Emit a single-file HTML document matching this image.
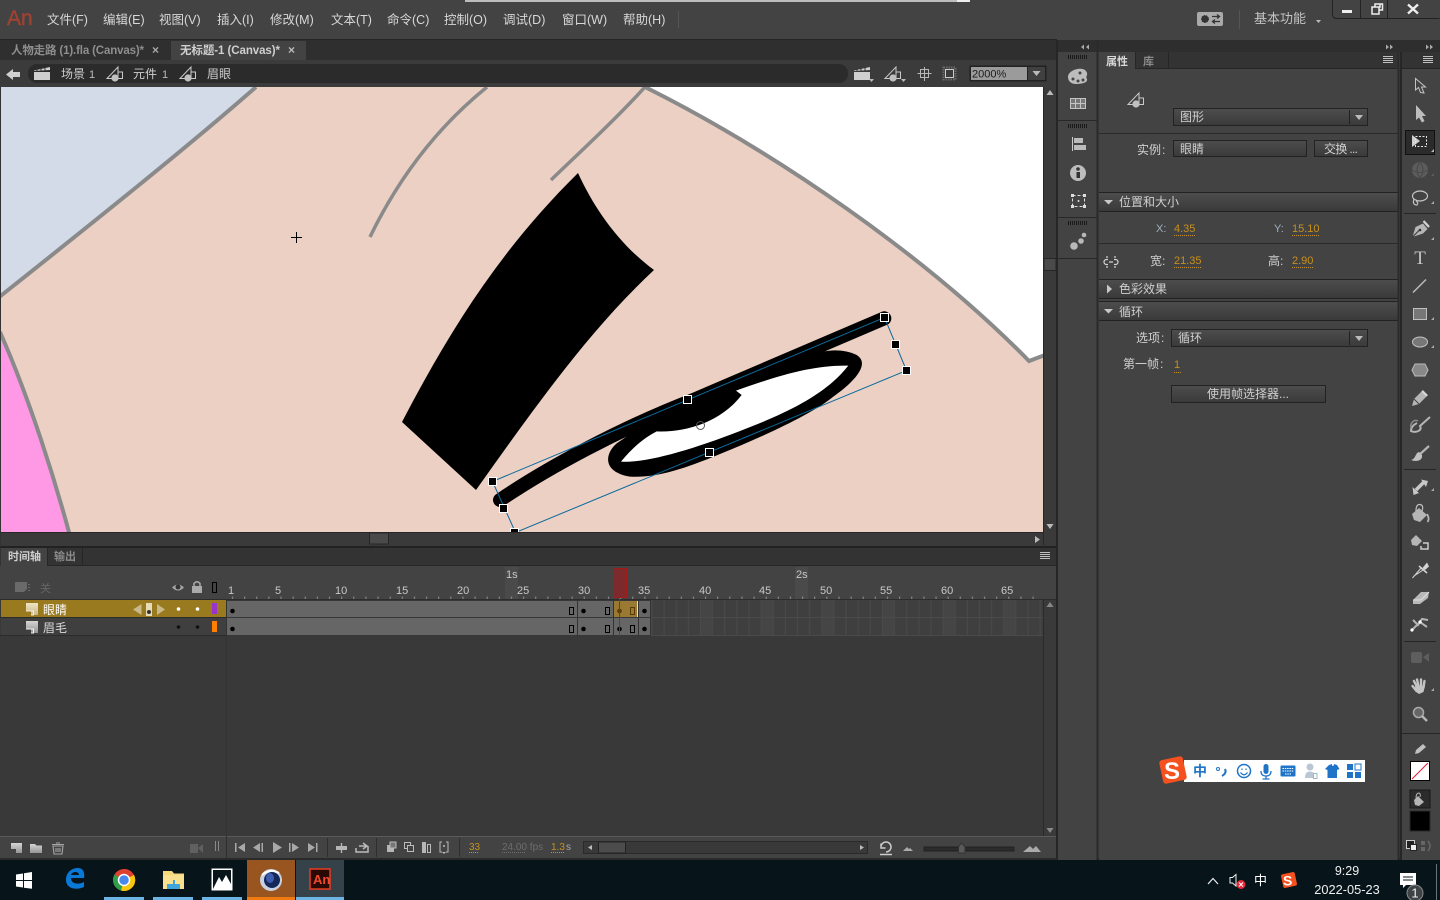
<!DOCTYPE html>
<html lang="zh"><head><meta charset="utf-8"><title>Animate</title>
<style>
html,body{margin:0;padding:0;background:#434343;width:1440px;height:900px;overflow:hidden}
svg{display:block;position:absolute;left:0;top:0}
text{font-family:"Liberation Sans","WenQuanYi Zen Hei","Noto Sans CJK SC",sans-serif;font-size:12px;fill:#d0d0d0}
.m{font-size:12.5px;fill:#d8d8d8}
.o{fill:#c8901c;font-size:11px}
.r{font-size:11px;fill:#c8c8c8}
</style></head><body>
<svg width="1440" height="900" viewBox="0 0 1440 900" xmlns="http://www.w3.org/2000/svg">
<defs>
<linearGradient id="g" x1="0" y1="0" x2="0" y2="1"><stop offset="0" stop-color="#4d4d4d"/><stop offset="1" stop-color="#3a3a3a"/></linearGradient>
<linearGradient id="ic" x1="0" y1="0" x2="0" y2="1"><stop offset="0" stop-color="#d4d4d4"/><stop offset="1" stop-color="#959595"/></linearGradient>
<linearGradient id="ic2" x1="0" y1="0" x2="0" y2="1"><stop offset="0" stop-color="#efe5c4"/><stop offset="1" stop-color="#c9b98a"/></linearGradient>
<pattern id="cells" x="700" y="600" width="60.65" height="18" patternUnits="userSpaceOnUse"><rect width="60.65" height="18" fill="#3f3f3f"/><rect width="12.13" height="18" fill="#454545"/><path d="M.5 0V18M12.6 0V18M24.8 0V18M36.9 0V18M49 0V18M0 17.500H60.650" stroke="#4a4a4a" fill="none"/></pattern>
<pattern id="ticks" x="227" y="595" width="12.13" height="5" patternUnits="userSpaceOnUse"><rect x="5" y="1.500" width="1" height="3" fill="#8f8f8f"/></pattern>
<clipPath id="st"><rect x="1" y="87" width="1042" height="445"/></clipPath>
<g id="sym"><path d="M-8 4.500 L3 -7 V4.500 Z" fill="none" stroke="#cacaca"/><path d="M3 -2H7.500V4.500H3" fill="none" stroke="#cacaca"/><circle cx="0" cy="4" r="3.600" fill="#c0c0c0"/></g>
<g id="ham"><path d="M-5 -3.500H5M-5 -1.500H5M-5 .5H5M-5 2.500H5" stroke="#c0c0c0"/></g>
<g id="clap"><rect x="-8" y="-2" width="16" height="8" fill="#cfcfcf"/><path d="M-8 -3.500L8 -7V-4L-8 -3Z" fill="#cfcfcf"/><path d="M-5 -6V-3M-1 -6V-3M3 -7V-3" stroke="#333"/></g>
<g id="lic"><path d="M-6 -6H6V6H-1V1.500H-6Z" fill="url(#ic)"/><path d="M-6 2H1.500V6H-1" fill="none" stroke="#eee"/></g>
<g id="lic2"><path d="M-6 -6H6V6H-1V1.500H-6Z" fill="url(#ic2)"/><path d="M-6 2H1.500V6H-1" fill="none" stroke="#f6efd8"/></g>
</defs>

<rect width="1440" height="900" fill="#434343"/>
<!-- top bar -->
<rect x="465" y="0" width="505" height="2" fill="#bdbdbd"/>
<rect x="957" y="0" width="13" height="2" fill="#eee"/>
<text x="7" y="25" style="font-size:21px;fill:#a04232;stroke:#a04232;stroke-width:.4">An</text>
<text class="m" x="47" y="24">文件(F)</text><text class="m" x="103" y="24">编辑(E)</text><text class="m" x="159" y="24">视图(V)</text><text class="m" x="217" y="24">插入(I)</text><text class="m" x="270" y="24">修改(M)</text><text class="m" x="331" y="24">文本(T)</text><text class="m" x="387" y="24">命令(C)</text><text class="m" x="444" y="24">控制(O)</text><text class="m" x="503" y="24">调试(D)</text><text class="m" x="562" y="24">窗口(W)</text><text class="m" x="623" y="24">帮助(H)</text>
<path d="M678.500 11V28" stroke="#555"/>
<rect x="1197" y="12" width="26" height="14" rx="2" fill="#aaa"/>
<circle cx="1205" cy="19" r="3.500" fill="#333" stroke="#333" stroke-dasharray="1.500 1"/>
<path d="M1212 16.500H1219M1217 14.500L1219.500 16.500L1217 18.500M1220 21.500H1213M1215 19.500L1212.500 21.500L1215 23.500" stroke="#333" fill="none" stroke-width="1.300"/>
<path d="M1239.500 10V29" stroke="#555"/>
<text x="1254" y="23" style="font-size:13px;fill:#c4c4c4">基本功能</text>
<path d="M1316 20h5l-2.500 3z" fill="#bbb"/>
<path d="M1332.500 0V14Q1332.500 18.500 1337 18.500H1439.500M1360.500 0V18M1387.500 0V18" fill="none" stroke="#222"/>
<rect x="1342" y="10" width="10" height="3" fill="#eee"/>
<path d="M1372 7h8v-3h-5v3M1372 7v7h7v-7zM1379.500 4h3v6h-3" fill="none" stroke="#eee" stroke-width="1.500"/>
<path d="M1408 4.500L1418 13.500M1418 4.500L1408 13.500" stroke="#eee" stroke-width="2.400"/>

<!-- tabs -->
<rect x="0" y="39" width="1057" height="21" fill="#2f2f2f"/>
<path d="M0 39.500H1057" stroke="#252525"/>
<rect x="171" y="41" width="135" height="19" fill="#434343"/>
<text x="11" y="54" textLength="133" style="font-size:11.500px;fill:#8e8e8e;font-weight:bold">人物走路 (1).fla (Canvas)*</text>
<text x="152" y="54" style="font-size:12px;fill:#aaa;font-weight:bold">×</text>
<text x="180" y="54" textLength="100" style="font-size:11.500px;fill:#cfcfcf;font-weight:bold">无标题-1 (Canvas)*</text>
<text x="288" y="54" style="font-size:12px;fill:#bbb;font-weight:bold">×</text>

<!-- edit bar -->
<rect x="0" y="60" width="1057" height="27" fill="#3b3b3b"/>
<rect x="28" y="64" width="820" height="19" rx="9" fill="#2b2b2b"/>
<path d="M6 74.500L13 69V72H20V77H13V80Z" fill="#d0d0d0"/>
<use href="#clap" x="42" y="74"/>
<text x="61" y="78" style="font-size:12px;fill:#cfcfcf">场景</text><text x="89" y="78" style="font-size:11px;fill:#bbb">1</text>
<use href="#sym" x="115" y="74"/>
<text x="133" y="78" style="font-size:12px;fill:#cfcfcf">元件</text><text x="162" y="78" style="font-size:11px;fill:#bbb">1</text>
<use href="#sym" x="188" y="74"/>
<text x="207" y="78" style="font-size:12px;fill:#cfcfcf">眉眼</text>
<use href="#clap" x="862" y="74"/><path d="M869 79h5l-2.500 3z" fill="#bbb"/>
<use href="#sym" x="893" y="74"/><path d="M901 79h5l-2.500 3z" fill="#bbb"/>
<path d="M924.500 67V81M917.500 73.500H931.500" stroke="#b8b8b8"/><rect x="920.500" y="69.500" width="8" height="8" fill="none" stroke="#b8b8b8"/>
<rect x="943.500" y="67.500" width="12" height="12" fill="none" stroke="#6a6a6a" stroke-width="2" stroke-dasharray="1.500 1"/><rect x="945.500" y="69.500" width="8" height="8" fill="none" stroke="#ccc"/>
<rect x="969.500" y="65.500" width="77" height="16" fill="#222"/>
<rect x="971" y="67" width="56" height="13" fill="#9b9b9b"/>
<rect x="1028" y="67" width="17" height="13" fill="#404040"/>
<path d="M1032.500 71h8l-4 5z" fill="#bbb"/>
<text x="972" y="77.500" style="font-size:11px;fill:#1a1a1a">2000%</text>

<!-- stage -->
<rect x="1" y="87" width="1042" height="445" fill="#ecd0c3"/>
<g clip-path="url(#st)">
<path d="M-2 87H256C190 145 90 225 -2 298Z" fill="#d3dae8"/>
<path d="M-2 298C90 225 190 145 256 87" fill="none" stroke="#8a8a8a" stroke-width="4"/>
<path d="M645 87C775 152 925 255 1029 361L1045 355V87Z" fill="#fff"/>
<path d="M645 87C775 152 925 255 1029 361L1045 355" fill="none" stroke="#8a8a8a" stroke-width="4"/>
<path d="M-2 330C30 400 55 480 70 536H-2Z" fill="#ff99e6"/>
<path d="M0 332C30 400 55 480 70 536" fill="none" stroke="#8a8a8a" stroke-width="4"/>
<path d="M487 87C440 125 400 175 370 237" fill="none" stroke="#8a8a8a" stroke-width="3.500"/>
<path d="M645 87C615 120 580 152 551 180" fill="none" stroke="#8a8a8a" stroke-width="3.500"/>
<path d="M578 173C595 210 620 245 654 270C590 330 540 400 476 490L402 422C450 330 500 250 578 173Z" fill="#000"/>
<g transform="translate(480 300) scale(.33333)">
<path d="M60 600C200 505 420 385 640 300L1213 55" fill="none" stroke="#000" stroke-width="42" stroke-linecap="round"/>
<path d="M410 430C375 460 365 515 450 530C540 535 640 495 720 462C850 410 1000 340 1060 290C1130 240 1170 190 1130 165C1100 150 1060 148 1030 155L600 300Z" fill="#000"/>
<path d="M423 485C460 440 495 412 530 394C610 398 720 370 785 285L768 272C900 225 1000 195 1105 197C1040 280 930 335 800 385C650 445 500 490 423 485Z" fill="#fff"/>
</g>
<path d="M492.500 481.500L884.500 317.500L906.500 370.500L515.500 532.500Z" fill="none" stroke="#0a6a9c"/>
<g fill="#000" stroke="#fff">
<rect x="488.500" y="477.500" width="8" height="8"/><rect x="683.500" y="395.500" width="8" height="8"/><rect x="880.500" y="313.500" width="8" height="8"/><rect x="891.500" y="340.500" width="8" height="8"/><rect x="902.500" y="366.500" width="8" height="8"/><rect x="705.500" y="448.500" width="8" height="8"/><rect x="510.500" y="528.500" width="8" height="8"/><rect x="499.500" y="504.500" width="8" height="8"/>
</g>
<circle cx="700.500" cy="425.500" r="4" fill="none" stroke="#555"/>
<path d="M296.500 232V243M291 237.500H302" stroke="#000"/>
</g>
<!-- scrollbars -->
<rect x="1043" y="87" width="14" height="458" fill="#3a3a3a"/>
<rect x="0" y="532" width="1057" height="14" fill="#3a3a3a"/>
<path d="M0 532.500H1043M1043.500 87V545" stroke="#272727"/>
<path d="M1050 90l3.500 5h-7zM1050 529l3.500-5h-7z" fill="#bbb"/>
<path d="M1035 536l5 3.500-5 3.500z" fill="#bbb"/>
<rect x="1044" y="258.500" width="12" height="12" fill="#4a4a4a" stroke="#262626"/>
<rect x="369.500" y="533" width="19" height="11" fill="#4a4a4a" stroke="#262626"/>

<!-- timeline -->
<rect x="0" y="546" width="1057" height="2" fill="#222"/>
<rect x="0" y="548" width="1057" height="18" fill="#333"/>
<rect x="1" y="548" width="46" height="18" fill="#434343"/>
<path d="M47.500 548V566M82.500 548V566" stroke="#262626"/>
<path d="M47 565.500H1057" stroke="#262626"/>
<text x="8" y="560" style="font-size:11px;fill:#d0d0d0;font-weight:bold">时间轴</text>
<text x="54" y="560" style="font-size:11px;fill:#8a8a8a;font-weight:bold">输出</text>
<use href="#ham" x="1045" y="556"/>
<rect x="0" y="566" width="1057" height="34" fill="#434343"/>
<rect x="505" y="567" width="13" height="33" fill="#4a4a4a"/><rect x="795" y="567" width="13" height="33" fill="#4a4a4a"/>
<rect x="227" y="595" width="816" height="5" fill="url(#ticks)"/>
<text class="r" x="506" y="578">1s</text><text class="r" x="796" y="578">2s</text>
<text class="r" x="228" y="594">1</text><text class="r" x="275" y="594">5</text><text class="r" x="335" y="594">10</text><text class="r" x="396" y="594">15</text><text class="r" x="457" y="594">20</text><text class="r" x="517" y="594">25</text><text class="r" x="578" y="594">30</text><text class="r" x="638" y="594">35</text><text class="r" x="699" y="594">40</text><text class="r" x="759" y="594">45</text><text class="r" x="820" y="594">50</text><text class="r" x="880" y="594">55</text><text class="r" x="941" y="594">60</text><text class="r" x="1001" y="594">65</text>
<!-- layers header -->
<path d="M15 582H27V589L24 592H15Z" fill="#6a6a6a"/><path d="M29 584v1M29 587v1M29 590v1" stroke="#777" stroke-width="1.500"/>
<text x="40" y="592" style="font-size:11px;fill:#666">关</text>
<path d="M172 587.500Q178 581.500 184 587.500Q178 593.500 172 587.500Z" fill="#a5a5a5"/><circle cx="178" cy="587" r="2.500" fill="#333"/>
<rect x="192" y="586" width="10" height="7" fill="#aaa"/><path d="M194 586V583.500Q197 580 200 583.500V586" fill="none" stroke="#aaa" stroke-width="1.500"/>
<rect x="212.500" y="582.500" width="4" height="10" fill="none" stroke="#000"/>
<!-- layers -->
<rect x="0" y="600" width="1057" height="236" fill="#393939"/>
<path d="M0 599.500H1057" stroke="#2c2c2c"/>
<rect x="1" y="600" width="225" height="18" fill="#9a7a1e"/>
<rect x="1" y="618" width="225" height="18" fill="#3f3f3f"/>
<path d="M0 617.500H227M0 635.500H1043" stroke="#2c2c2c"/>
<use href="#lic2" x="32" y="609"/><use href="#lic" x="32" y="627"/>
<text x="43" y="614" style="font-size:12px;fill:#fff">眼睛</text>
<text x="43" y="632" style="font-size:12px;fill:#ddd">眉毛</text>
<path d="M133 609.500L141.500 604V615Z" fill="#c9b98a"/><rect x="146" y="603" width="6" height="13" fill="#e8dcb8"/><circle cx="149" cy="612" r="2" fill="#333"/><path d="M165 609.500L157 604V615Z" fill="#c9b98a"/>
<circle cx="178.500" cy="609" r="1.800" fill="#fff"/><circle cx="197.500" cy="609" r="1.800" fill="#fff"/>
<circle cx="178.500" cy="627" r="1.800" fill="#111"/><circle cx="197.500" cy="627" r="1.800" fill="#111"/>
<rect x="212" y="603" width="5" height="11" fill="#9933cc"/>
<rect x="212" y="621" width="5" height="11" fill="#ff8000"/>
<!-- frames -->
<rect x="650.600" y="600" width="392.400" height="36" fill="url(#cells)"/>
<rect x="227" y="600" width="424" height="35" fill="#666"/>
<path d="M227 600.500H651M227 617.500H651M227 635.500H651" stroke="#383838"/>
<rect x="613.500" y="601" width="24" height="16" fill="#9a7a32"/>
<path d="M637.500 601V617" stroke="#ffe83c"/>
<path d="M226.500 600V836M577.500 600V636M613.500 600V636M638.500 600V636M650.500 600V636" stroke="#333"/>
<g fill="#000"><circle cx="232.500" cy="611" r="2.300"/><circle cx="232.500" cy="629" r="2.300"/><circle cx="583.500" cy="611" r="2.300"/><circle cx="583.500" cy="629" r="2.300"/><circle cx="619.500" cy="611" r="2.300" fill="#5a3c06"/><circle cx="619.500" cy="629" r="2.300"/><circle cx="644.500" cy="611" r="2.300"/><circle cx="644.500" cy="629" r="2.300"/></g>
<g fill="none" stroke="#000"><rect x="569.500" y="607.500" width="4" height="7"/><rect x="569.500" y="625.500" width="4" height="7"/><rect x="605.500" y="607.500" width="4" height="7"/><rect x="605.500" y="625.500" width="4" height="7"/><rect x="630.500" y="607.500" width="4" height="7" stroke="#5a3c06"/><rect x="630.500" y="625.500" width="4" height="7"/></g>
<rect x="613.500" y="568.500" width="13" height="29" fill="#7c2a2c" stroke="#a81a1a"/>
<path d="M619.500 598V636" stroke="#c01818"/><path d="M619.500 636V836" stroke="#5c2a2a"/>
<rect x="1043" y="600" width="14" height="236" fill="#3a3a3a"/>
<path d="M1043.500 600V836" stroke="#2a2a2a"/>
<path d="M1050 602l3.500 5h-7zM1050 833l3.500-5h-7z" fill="#888"/>

<!-- timeline bottom -->
<rect x="0" y="836" width="1057" height="23" fill="#434343"/>
<path d="M0 836.500H1057" stroke="#5a5a5a"/>
<path d="M226.500 836V858M327.500 838V857M376.500 838V857M459.500 838V857" stroke="#2f2f2f"/>
<path d="M11 843H22V853H16V849H11Z" fill="url(#ic)"/>
<path d="M30 844H35L36.500 845.500H42V853H30Z" fill="url(#ic)"/>
<path d="M53 846H63L62 854H54ZM52 844.500H64M56 843H60M56 848V852M58 848V852M60 848V852" stroke="#a5a5a5" fill="none" stroke-width="1.100"/>
<rect x="190" y="844" width="8" height="9" fill="#606060"/><path d="M198 848L203 844V853Z" fill="#606060"/>
<path d="M215.500 841V851M218.500 841V851" stroke="#8a8a8a"/>
<g fill="#a8a8a8">
<path d="M235 843h1.500v9H235zM245 843v9l-7-4.500z"/>
<path d="M260 843v9l-7-4.500zM261.500 843h1.500v9h-1.500z"/>
<path d="M273 842v11l9-5.500z"/>
<path d="M289 843h1.500v9H289zM292 843l7 4.500-7 4.500z"/>
<path d="M308 843l7 4.500-7 4.500zM316 843h1.500v9H316z"/>
</g>
<path d="M341.500 843V853" stroke="#b5b5b5" stroke-width="1.400"/><rect x="336" y="846" width="11" height="4" fill="#b5b5b5"/>
<path d="M356 848V852H368V846M359 846L366 846M363 843L367 846L363 849" fill="none" stroke="#bbb" stroke-width="1.500"/>
<rect x="387" y="845" width="7" height="7" fill="#b5b5b5"/><rect x="390" y="842" width="6" height="6" fill="#777" stroke="#bbb"/>
<rect x="404.500" y="842.500" width="6" height="6" fill="none" stroke="#bbb"/><rect x="407.500" y="845.500" width="6" height="6" fill="#434343" stroke="#bbb"/>
<rect x="422" y="842" width="4" height="11" fill="#b5b5b5"/><rect x="427.500" y="844.500" width="3" height="8" fill="none" stroke="#bbb"/>
<path d="M442 842H440V852H442M446 842H448V852H446" fill="none" stroke="#bbb"/><circle cx="444" cy="846" r="1" fill="#bbb"/><path d="M442 852h4l-2 2z" fill="#bbb"/>
<text class="o" x="469" y="850" style="font-size:10px">33</text><path d="M469 852.500H479" stroke="#c8901c" stroke-dasharray="1 1"/>
<text x="502" y="850" style="font-size:10px;fill:#6d6d6d">24.00 fps</text><path d="M502 852.500H526" stroke="#6d6d6d" stroke-dasharray="1 1"/>
<text class="o" x="551" y="850" style="font-size:10px">1.3</text><text x="566" y="850" style="font-size:10px;fill:#aaa">s</text><path d="M551 852.500H564" stroke="#c8901c" stroke-dasharray="1 1"/>
<rect x="583.500" y="841.500" width="284" height="12" fill="#393939" stroke="#2a2a2a"/>
<rect x="598.500" y="842" width="27" height="11" fill="#4c4c4c" stroke="#222"/>
<path d="M592 845v5l-4-2.500zM860 845v5l4-2.500z" fill="#bbb"/>
<path d="M881 847A5 5 0 1 1 886 852M881 843.500V848H885.500M880 854.500H892" fill="none" stroke="#ccc" stroke-width="1.500"/>
<path d="M903 851l4-4 2 2 1-1 3 3z" fill="#aaa"/>
<rect x="924" y="847" width="90" height="4" fill="#2b2b2b" stroke="#222"/>
<path d="M958.500 853V847L961.500 843L965 847V853Z" fill="#5a5a5a" stroke="#333"/>
<path d="M1023 852l7-6 3 3 3-3 5 6z" fill="#aaa"/>

<!-- dividers -->
<rect x="1056" y="40" width="2" height="820" fill="#262626"/>
<rect x="0" y="858" width="1440" height="2" fill="#2a2a2a"/>
<rect x="0" y="87" width="1" height="460" fill="#333"/>

<!-- right header -->
<rect x="1058" y="40" width="382" height="12" fill="#2e2e2e"/>
<path d="M1084 44.500l-3 2.500 3 2.500zM1089 44.500l-3 2.500 3 2.500zM1386 44.500l3 2.500-3 2.500zM1390 44.500l3 2.500-3 2.500zM1426 44.500l3 2.500-3 2.500zM1430 44.500l3 2.500-3 2.500z" fill="#aaa"/>
<!-- left icon column -->
<rect x="1058" y="52" width="40" height="808" fill="#434343"/>
<path d="M1058 120.500H1097M1058 217.500H1097M1058 258.500H1097" stroke="#282828"/>
<path d="M1097.500 40V860" stroke="#2a2a2a" stroke-width="2"/>
<g stroke="#1a1a1a" stroke-dasharray="1 1"><path d="M1068 57H1088M1068 126H1088M1068 223H1088" stroke-width="4"/></g>
<path d="M1068 77C1068 70 1082 66 1086 71C1089 75 1085 76 1087 79C1088 83 1081 84 1076 84C1071 84 1068 81 1068 77Z" fill="#bcbcbc"/>
<g fill="#444"><circle cx="1073" cy="79" r="1.500"/><circle cx="1078" cy="81" r="1.500"/><circle cx="1083" cy="80" r="1.500"/><circle cx="1080" cy="73" r="1.500"/></g>
<rect x="1070.500" y="98.500" width="15" height="10" fill="#777" stroke="#c4c4c4"/><path d="M1070 103.500H1086M1075.500 98V109M1080.500 98V109" stroke="#c4c4c4"/>
<path d="M1072.500 137V151" stroke="#ccc"/><rect x="1074" y="138" width="9" height="5" fill="#bbb"/><rect x="1074" y="145" width="12" height="5" fill="#bbb"/>
<circle cx="1078" cy="173" r="8" fill="#bdbdbd"/><rect x="1076.500" y="172" width="3.500" height="6" fill="#333"/><circle cx="1078" cy="169" r="1.800" fill="#333"/>
<rect x="1072.500" y="195.500" width="12" height="11" fill="none" stroke="#ddd" stroke-dasharray="3 2"/><circle cx="1078.500" cy="201" r="1" fill="#ddd"/><g fill="#ddd"><rect x="1071" y="194" width="3" height="3"/><rect x="1083" y="194" width="3" height="3"/><rect x="1071" y="205" width="3" height="3"/><rect x="1083" y="205" width="3" height="3"/></g>
<circle cx="1074" cy="246" r="3.800" fill="#b8b8b8"/><circle cx="1081" cy="241" r="2.800" fill="#b8b8b8"/><circle cx="1084" cy="235" r="2.300" fill="#b8b8b8"/>

<!-- properties -->
<rect x="1099" y="52" width="300" height="808" fill="#434343"/>
<rect x="1099" y="52" width="300" height="17" fill="#333"/>
<rect x="1099" y="52" width="36" height="17" fill="#434343"/>
<path d="M1135.500 52V68.500H1168.500V52M1135 68.500H1399" stroke="#262626" fill="none"/>
<text x="1106" y="65" style="font-size:11px;fill:#d8d8d8;font-weight:bold">属性</text>
<text x="1143" y="65" style="font-size:11px;fill:#8a8a8a;font-weight:bold">库</text>
<use href="#ham" x="1388" y="60"/>
<use href="#sym" x="1136" y="100"/>
<rect x="1173.500" y="108.500" width="194" height="17" fill="url(#g)" stroke="#222"/>
<path d="M1349.500 110V124" stroke="#222"/><path d="M1355 115h8l-4 5z" fill="#bbb"/>
<text x="1180" y="121" style="font-size:12px">图形</text>
<path d="M1099 133.500H1399" stroke="#2a2a2a"/>
<text x="1137" y="154" style="font-size:12px">实例</text><text x="1162" y="154" style="font-size:12px">:</text>
<rect x="1173.500" y="140.500" width="133" height="16" fill="url(#g)" stroke="#222"/>
<text x="1180" y="153" style="font-size:12px">眼睛</text>
<rect x="1314.500" y="140.500" width="53" height="16" fill="url(#g)" stroke="#222"/>
<text x="1324" y="153" textLength="34" style="font-size:12px">交换 ...</text>
<rect x="1099" y="193" width="300" height="18" fill="url(#g)"/><path d="M1099 192.500H1399M1099 211.500H1399" stroke="#222"/>
<path d="M1104 200h9l-4.500 4.500z" fill="#c8c8c8"/>
<text x="1119" y="206" style="font-size:12px">位置和大小</text>
<text x="1156" y="232" style="font-size:11px;fill:#9fb0c0">X:</text><text class="o" x="1174" y="232">4.35</text><path d="M1174 235.500H1195" stroke="#c8901c" stroke-dasharray="1 1"/>
<text x="1274" y="232" style="font-size:11px;fill:#9fb0c0">Y:</text><text class="o" x="1292" y="232">15.10</text><path d="M1292 235.500H1319" stroke="#c8901c" stroke-dasharray="1 1"/>
<path d="M1099 243.500H1399" stroke="#2a2a2a"/>
<path d="M1108 259.500H1106.500A2.500 2.500 0 0 0 1106.500 264.500H1108M1114 259.500H1115.500A2.500 2.500 0 0 1 1115.500 264.500H1114M1107 256V258M1115 256V258M1107 266V268M1115 266V268M1109 262H1113" fill="none" stroke="#d4d4d4" stroke-width="1.200"/>
<text x="1150" y="265" style="font-size:12px">宽:</text><text class="o" x="1174" y="264">21.35</text><path d="M1174 267.500H1201" stroke="#c8901c" stroke-dasharray="1 1"/>
<text x="1268" y="265" style="font-size:12px">高:</text><text class="o" x="1292" y="264">2.90</text><path d="M1292 267.500H1313" stroke="#c8901c" stroke-dasharray="1 1"/>
<rect x="1099" y="280" width="300" height="18" fill="url(#g)"/><path d="M1099 279.500H1399M1099 298.500H1399" stroke="#222"/>
<path d="M1107 284.500l5 4.500-5 4.500z" fill="#c8c8c8"/>
<text x="1119" y="293" style="font-size:12px">色彩效果</text>
<rect x="1099" y="302" width="300" height="18" fill="url(#g)"/><path d="M1099 301.500H1399M1099 320.500H1399" stroke="#222"/>
<path d="M1104 309h9l-4.500 4.500z" fill="#c8c8c8"/>
<text x="1119" y="316" style="font-size:12px">循环</text>
<text x="1136" y="342" style="font-size:12px">选项</text><text x="1161" y="342" style="font-size:12px">:</text>
<rect x="1171.500" y="329.500" width="196" height="17" fill="url(#g)" stroke="#222"/>
<path d="M1349.500 331V345" stroke="#222"/><path d="M1355 336h8l-4 5z" fill="#bbb"/>
<text x="1178" y="342" style="font-size:12px">循环</text>
<text x="1123" y="368" style="font-size:12px">第一帧</text><text x="1160" y="368" style="font-size:12px">:</text>
<text class="o" x="1174" y="368">1</text><path d="M1174 372.500H1181" stroke="#c8901c" stroke-dasharray="1 1"/>
<rect x="1171.500" y="385.500" width="154" height="17" fill="url(#g)" stroke="#222"/>
<text x="1207" y="398" style="font-size:12px">使用帧选择器...</text>
<path d="M1398.500 52V860" stroke="#2a2a2a" stroke-width="2"/>

<!-- tools -->
<rect x="1400" y="52" width="2" height="808" fill="#262626"/>
<rect x="1402" y="52" width="38" height="808" fill="#434343"/>
<rect x="1402" y="52" width="38" height="17" fill="#333"/><path d="M1402 68.500H1440" stroke="#262626"/>
<use href="#ham" x="1428" y="60"/>
<path d="M1415.500 78.500V90L1418.500 87.500L1420.500 92.500L1424 93L1421.500 87H1425.500Z" fill="none" stroke="#c4c4c4"/>
<path d="M1416 105V120L1419 117.500L1422 122.500L1424.500 121L1422 116H1426Z" fill="#bdbdbd"/>
<rect x="1405.500" y="130.500" width="29" height="24" fill="#2b2b2b" stroke="#111"/>
<path d="M1412 135V147L1420 141Z" fill="#d0d0d0"/><rect x="1415.500" y="136.500" width="11" height="10" fill="none" stroke="#e4e4e4" stroke-dasharray="2 1.500"/>
<path d="M1431 152h3v-3z" fill="#bbb"/>
<circle cx="1420" cy="170" r="8" fill="#5c5c5c"/><path d="M1412 170Q1420 175 1428 170M1420 162Q1414 170 1420 178M1420 162Q1426 170 1420 178" stroke="#484848" fill="none"/>
<path d="M1431 176h3v-3z" fill="#5c5c5c"/>
<path d="M1431 204h3v-3z M1431 240h3v-3z M1431 320h3v-3z M1431 348h3v-3z M1431 491h3v-3z M1431 691h3v-3z" fill="#aaa"/>
<ellipse cx="1420" cy="196" rx="7.500" ry="5" fill="none" stroke="#c4c4c4" stroke-width="1.200"/><path d="M1414 199Q1412 205 1417 205Q1419 203 1416 201" fill="none" stroke="#c4c4c4" stroke-width="1.200"/>
<path d="M1404 213.500H1436M1404 469.500H1436M1404 641.500H1436M1402 733.500H1440" stroke="#262626"/>
<path d="M1412.500 237L1415.500 227L1423 223.500L1427.500 229L1423 233.500Z" fill="#b5b5b5"/><path d="M1412.500 237L1419.500 230" stroke="#333"/><circle cx="1420" cy="230" r="1.300" fill="#333"/><path d="M1423.500 221L1429 227" stroke="#d0d0d0" stroke-width="2.400"/>
<text x="1420" y="264" text-anchor="middle" style="font-family:'Liberation Serif',serif;font-size:19px;fill:#c4c4c4">T</text>
<path d="M1413 292.500L1426 279.500" stroke="#bbb" stroke-width="1.500"/>
<rect x="1413.500" y="308.500" width="13" height="11" fill="#777" stroke="#c0c0c0"/>
<ellipse cx="1420" cy="342" rx="7.500" ry="5" fill="#777" stroke="#c0c0c0"/>
<path d="M1415 364H1425L1428 370L1425 376H1415L1412 370Z" fill="#888" stroke="#bbb"/>
<path d="M1412 406L1414 399L1423 390L1428 395L1419 404Z" fill="#b5b5b5"/><path d="M1414 399L1419 404" stroke="#444"/><path d="M1422 391L1427 396" stroke="#dcdcdc" stroke-width="1.500"/>
<path d="M1430 417L1420 426C1423 431 1415 433 1411 431C1411 428 1413 425 1417 423" fill="none" stroke="#b5b5b5" stroke-width="2"/><path d="M1418 421C1414 419 1410 423 1411 428" fill="none" stroke="#8c8c8c" stroke-width="1.500"/>
<path d="M1429 446L1419 455" stroke="#b5b5b5" stroke-width="2.200"/><path d="M1419 452C1415 453 1416 459 1411 460C1416 462 1423 461 1422 455Z" fill="#c0c0c0"/>
<path d="M1416 490L1424 482" stroke="#c8c8c8" stroke-width="3.500"/><path d="M1412.500 487L1419 493L1413.500 495ZM1421 479.500L1428 481L1426 487Z" fill="#c8c8c8"/>
<path d="M1412 514L1419 508L1427 515L1420 522L1414 520Z" fill="#b5b5b5"/><path d="M1416 511Q1416 504 1420 504.500Q1424 505 1422 511" fill="none" stroke="#c0c0c0" stroke-width="1.200"/><path d="M1427 514Q1430 519 1427.500 522" stroke="#b5b5b5" stroke-width="1.800" fill="none"/>
<path d="M1411 540L1416 535L1422 541L1417 546L1412 545Z" fill="#b5b5b5"/><path d="M1423 543H1428V549H1421V546" fill="none" stroke="#ccc" stroke-width="1.500"/>
<path d="M1414 576L1412.500 578L1421 568L1423 570Z" fill="none" stroke="#d4d4d4"/><path d="M1419 566L1427 573" stroke="#d4d4d4" stroke-width="1.500"/><path d="M1422.500 568L1427 562.500L1429 566.500L1425 570Z" fill="#d4d4d4"/>
<path d="M1413 600L1421 592H1429L1428 598L1420 604H1413Z" fill="#b8b8b8"/><path d="M1413 600H1421L1429 592" stroke="#e0e0e0" fill="none"/>
<path d="M1412 630L1420 622L1427 627M1413 620L1418 625L1422 619L1428 620" fill="none" stroke="#b5b5b5" stroke-width="2"/><circle cx="1412" cy="630" r="1.600" fill="#fff"/><circle cx="1420" cy="622" r="1.600" fill="#fff"/>
<rect x="1411" y="652" width="11" height="11" rx="2" fill="#5e5e5e"/><path d="M1423 657L1429 653V662Z" fill="#5e5e5e"/>
<path d="M1414 681L1417 687M1417 679.500L1418.500 686M1421 679.500L1421 686M1424.500 681L1423.500 687M1412.500 686L1416.500 691" stroke="#c4c4c4" stroke-width="2.400" stroke-linecap="round" fill="none"/><path d="M1415 686H1425L1423.500 692L1419 694L1415.500 691.500Z" fill="#c4c4c4"/>
<circle cx="1418.500" cy="712.500" r="5" fill="#666" stroke="#aaa" stroke-width="1.500"/><path d="M1422 716L1427 721" stroke="#b5b5b5" stroke-width="2.500"/>
<path d="M1415 754L1416 750L1423 744L1426 747L1419 753Z" fill="#c0c0c0"/>
<rect x="1410.500" y="761.500" width="19" height="19" fill="#fff" stroke="#000"/><path d="M1412 779L1428 763" stroke="#e8192c"/>
<rect x="1410" y="790" width="20" height="18" fill="#2b2b2b" stroke="#1a1a1a"/><path d="M1414 800L1418 796L1424 802L1419 806L1415 805Z" fill="#b5b5b5"/><path d="M1416 798Q1416 793 1419 793Q1421 794 1420 797" fill="none" stroke="#b5b5b5"/>
<rect x="1410" y="811" width="20" height="20" fill="#000" stroke="#2a2a2a"/>
<rect x="1406.500" y="840.500" width="8" height="8" fill="#222" stroke="#ccc"/><rect x="1410.500" y="844.500" width="6" height="6" fill="#eee" stroke="#222"/>
<rect x="1421" y="841" width="4" height="4" fill="#666"/><rect x="1421" y="847" width="4" height="4" fill="#666"/><path d="M1428 841Q1432 846 1428 851" stroke="#666" fill="none" stroke-width="1.500"/>

<!-- Sogou IME bar -->
<rect x="1184" y="760" width="181" height="22" fill="#fff"/>
<g transform="rotate(-12 1173 770)"><rect x="1161" y="758" width="24" height="24" rx="3" fill="#f4511e"/></g>
<text x="1164" y="779" style="font-size:24px;font-weight:bold;font-family:'Liberation Sans',sans-serif;fill:#fff">S</text>
<text x="1193" y="776" style="font-size:14px;fill:#1f74c8;font-weight:bold">中</text>
<circle cx="1218" cy="769" r="1.500" fill="none" stroke="#1f74c8"/><path d="M1225 769Q1227 773 1222 776" fill="none" stroke="#1f74c8" stroke-width="2"/>
<circle cx="1244" cy="771" r="6.500" fill="none" stroke="#1f74c8" stroke-width="1.500"/><path d="M1240.500 772.500Q1244 777 1247.500 772.500M1242 768.500v1.500M1246 768.500v1.500" stroke="#1f74c8" fill="none" stroke-width="1.200"/>
<rect x="1263.500" y="764" width="5" height="10" rx="2.500" fill="#1f74c8"/><path d="M1261 771Q1261 776 1266 776Q1271 776 1271 771M1266 776V779M1262.500 779H1269.500" stroke="#1f74c8" fill="none" stroke-width="1.300"/>
<rect x="1280.500" y="765.500" width="15" height="11" rx="1" fill="#1f74c8"/><path d="M1282.500 768.500H1293.500M1282.500 771H1293.500M1285 774H1291" stroke="#fff" stroke-dasharray="1.500 .8"/>
<circle cx="1310" cy="767" r="3.500" fill="#b9c6d4"/><path d="M1305 778Q1305 771.500 1310 771.500Q1315 771.500 1315 778Z" fill="#b9c6d4"/><rect x="1313.500" y="773.500" width="3.500" height="5" fill="#fff" stroke="#9bb"/>
<path d="M1329 765L1332 764Q1332 766 1332.500 766Q1334 766 1334 764L1337 765L1339.500 769L1337 770V778H1327.500V770L1325 769Z" fill="#1f74c8"/>
<rect x="1347" y="764" width="6" height="6" fill="#1f74c8"/><rect x="1355" y="764" width="6" height="6" fill="#fff" stroke="#1f74c8"/><rect x="1347" y="772" width="6" height="6" fill="#1f74c8"/><rect x="1355" y="772" width="6" height="6" fill="#1f74c8"/>

<!-- taskbar -->
<rect x="0" y="860" width="1440" height="40" fill="#07141a"/>
<rect x="247" y="860" width="48" height="40" fill="#98551f"/><rect x="247" y="897" width="48" height="3" fill="#f07a10"/>
<rect x="296" y="860" width="48" height="40" fill="#36424a"/><rect x="296" y="897" width="48" height="3" fill="#6cb4e4"/>
<rect x="104" y="897" width="40" height="3" fill="#6cb4e4"/><rect x="153" y="897" width="40" height="3" fill="#6cb4e4"/><rect x="202" y="897" width="40" height="3" fill="#6cb4e4"/>
<path d="M16 874.500L23 873.500V880H16ZM24 873.300L32 872V880H24ZM16 881H23V887.500L16 886.500ZM24 881H32V888.800L24 887.700Z" fill="#fff"/>
<path d="M66 880C66 872 72 868 78 868C83 868 85 872 84 878H71C71 884 78 885 84 882V887C75 891 66 888 66 880ZM71 875H79C79 871 72 871 71 875Z" fill="#0a78d7"/>
<circle cx="124" cy="880" r="11" fill="#e0402f"/>
<path d="M124 880L114.500 874.500A11 11 0 0 0 121 890.500Z" fill="#2e9e48"/>
<path d="M124 869A11 11 0 0 1 134 885L124 880Z" fill="#e0402f"/><path d="M124 880L134 875A11 11 0 0 1 121 890.500Z" fill="#f9c80e"/>
<circle cx="124" cy="880" r="5.500" fill="#4a88ee" stroke="#fff" stroke-width="1.500"/>
<path d="M163 871H172L174 873.500H184V889H163Z" fill="#f5d77c"/><rect x="163" y="875" width="21" height="14" fill="#fbe08f"/><path d="M167 889V884H173V880H175V884H180V889Z" fill="#3ea6dc"/>
<rect x="211.500" y="868.500" width="21" height="22" fill="#fff"/><rect x="213" y="870" width="18" height="19" fill="#07141a"/><path d="M213 889L219 877L222 882L226 875L231 884V889Z" fill="#fff"/>
<circle cx="271" cy="880" r="11" fill="#c9d2e0"/><circle cx="272" cy="880" r="8" fill="#16275a"/><ellipse cx="270" cy="878" rx="4" ry="5" fill="#3d5db0"/><path d="M262 875Q270 868 279 873" stroke="#fff" stroke-width="2" fill="none"/>
<rect x="310" y="869" width="20" height="20" fill="#2a0805" stroke="#e63c1e" stroke-width="1.500"/><text x="313" y="884" style="font-size:13px;fill:#f04a2a;font-weight:bold">An</text>
<path d="M1208 884L1213 878.500L1218 884" fill="none" stroke="#eee" stroke-width="1.200"/>
<path d="M1230 877.500H1232.500L1236 874.500V886L1232.500 883H1230Z" fill="none" stroke="#eee"/>
<circle cx="1241" cy="884.500" r="4.500" fill="#e62937"/><path d="M1239 882.500L1243 886.500M1243 882.500L1239 886.500" stroke="#fff"/>
<text x="1254" y="885" style="font-size:13px;fill:#fff">中</text>
<g transform="rotate(-12 1289 880)"><rect x="1282" y="873" width="14" height="14" rx="2" fill="#f4511e"/></g>
<text x="1283" y="885.500" style="font-size:14px;font-weight:bold;fill:#fff">S</text>
<text x="1347" y="875" text-anchor="middle" style="font-size:12.500px;fill:#f0f0f0">9:29</text>
<text x="1347" y="894" text-anchor="middle" style="font-size:12.800px;fill:#f0f0f0">2022-05-23</text>
<path d="M1400 873H1416V885H1406L1403 888V885H1400Z" fill="#fff"/><path d="M1403 877H1413M1403 880H1413" stroke="#07141a"/>
<circle cx="1415" cy="893" r="8" fill="#3e4347" stroke="#8a8a8a"/><text x="1415" y="897.500" text-anchor="middle" style="font-size:13px;fill:#eee">1</text>
<path d="M1436.500 864V900" stroke="#6b7478"/>
</svg>
</body></html>
